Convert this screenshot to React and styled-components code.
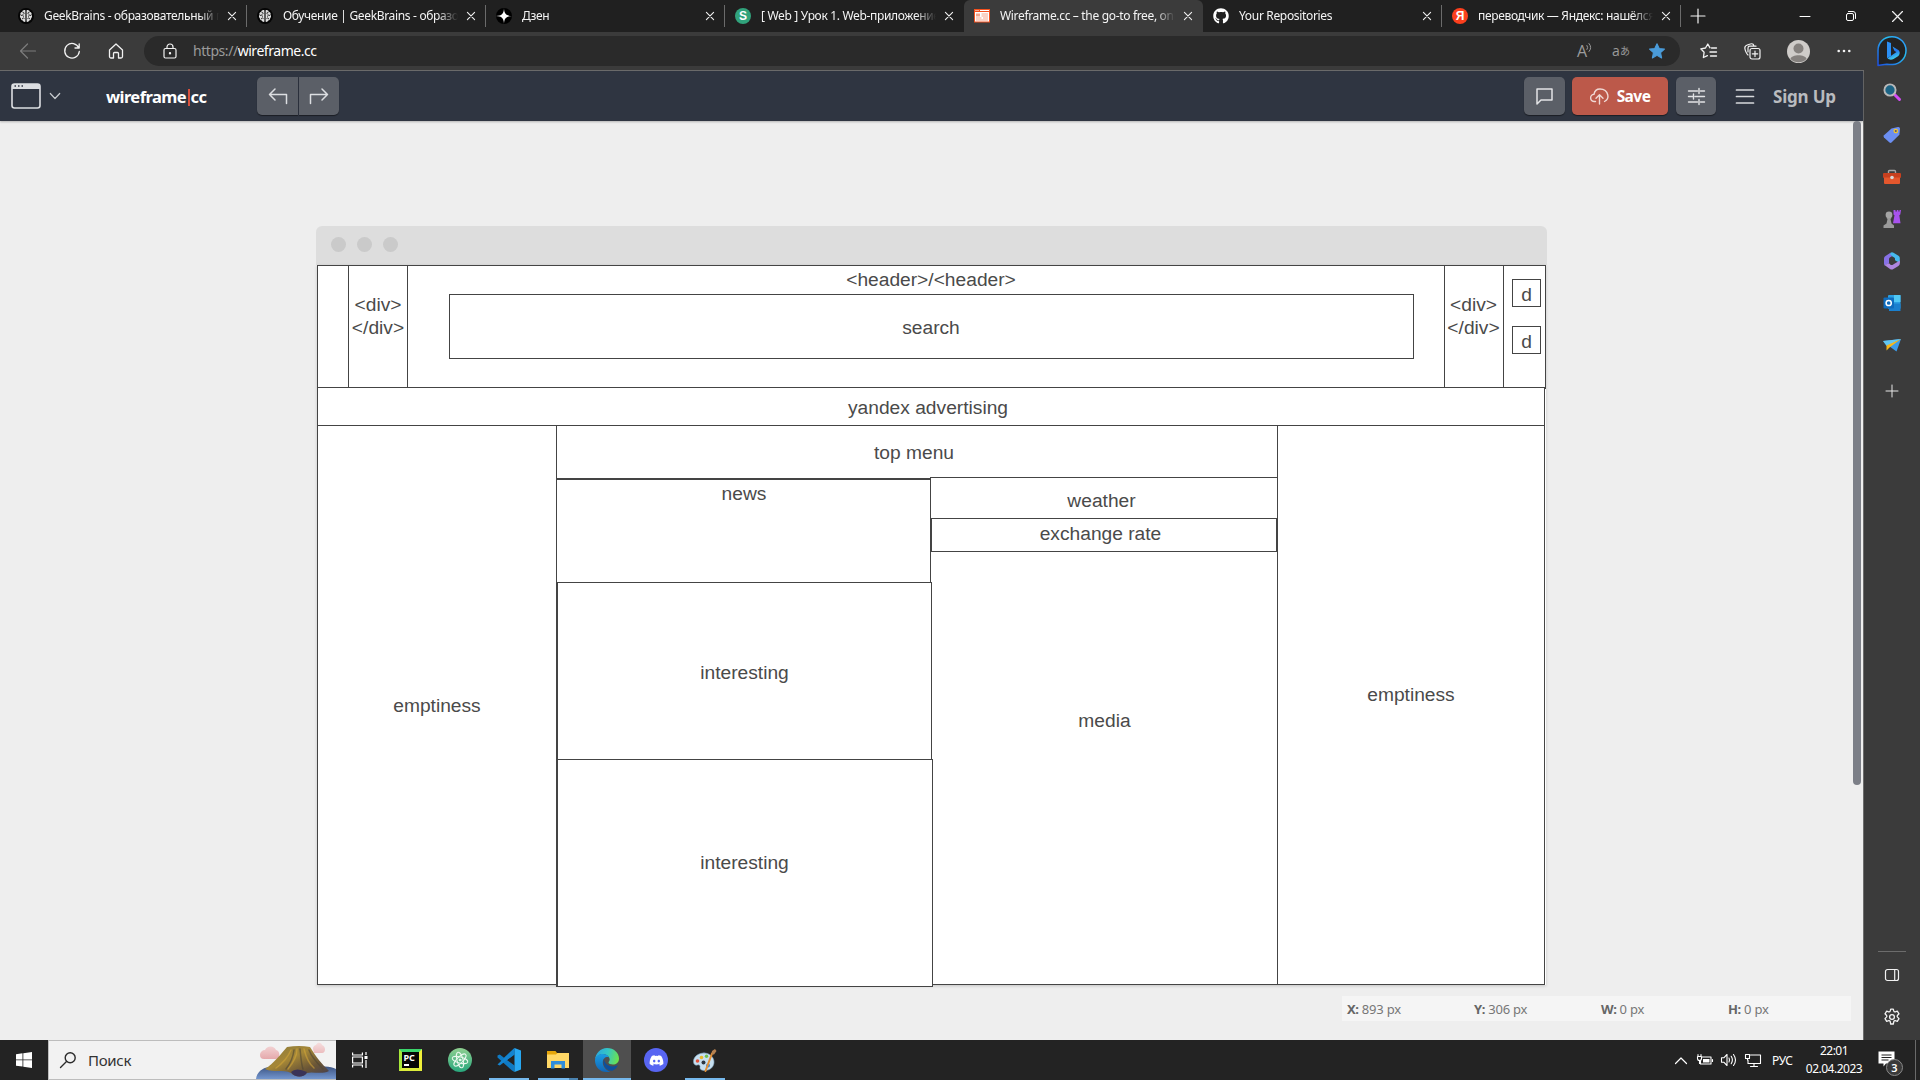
import React from 'react';
import styled, { createGlobalStyle, css } from 'styled-components';
import { FaGithub, FaDiscord } from 'react-icons/fa';

const Global = createGlobalStyle`
  *, *::before, *::after { box-sizing: border-box; }
  body { margin: 0; background: #202020; overflow: hidden; }
`;

const ui = '"Noto Sans", "Open Sans", sans-serif';

const Screen = styled.div`
  width: 1920px;
  height: 1080px;
  display: flex;
  flex-direction: column;
  overflow: hidden;
  font-family: ${ui};
  background: #202020;
`;

const Glyph = styled.svg`
  display: block;
  flex: none;
  width: ${p => p.$w || 20}px;
  height: ${p => p.$h || p.$w || 20}px;
  fill: none;
  stroke: ${p => p.$c || 'none'};
  stroke-width: ${p => p.$s || 1.2};
  stroke-linecap: round;
  stroke-linejoin: round;
  overflow: visible;
`;

/* ---------- tab strip ---------- */

const TabStrip = styled.div`
  height: 32px;
  flex: none;
  display: flex;
  background: #202020;
  padding-left: 8px;
`;

const TabBox = styled.div`
  width: 239px;
  height: 32px;
  flex: none;
  display: flex;
  align-items: center;
  padding: 0 10px;
  border-right: 1px solid transparent;
  border-image: ${p => (p.$line ? 'linear-gradient(transparent 6px, #6b6b6b 6px, #6b6b6b 26px, transparent 26px) 1' : 'none')};
  ${p => p.$active && css`
    background: #3b3b3b;
    border-radius: 6px 6px 0 0;
  `}
`;

const Favicon = styled.span`
  width: 16px;
  height: 16px;
  flex: none;
  display: flex;
  color: #fff;
`;

const TabTitle = styled.span`
  flex: 1;
  min-width: 0;
  margin: 0 9px 0 10px;
  font-size: 12px;
  line-height: 18px;
  letter-spacing: -0.33px;
  color: #f4f4f4;
  white-space: nowrap;
  overflow: hidden;
  mask-image: linear-gradient(to right, #000 calc(100% - 20px), transparent);
`;

const TabTools = styled.div`
  flex: 1;
  display: flex;
  align-items: center;
  padding-left: 10px;
`;

const WindowButtons = styled.div`
  margin-left: auto;
  display: flex;
  align-items: center;
  gap: 36px;
  padding-right: 17px;
`;

const Cross = ({ size = 8, s = 1.4 }) => (
  <Glyph $w={size} $c="#f0f0f0" $s={s} viewBox="0 0 10 10"><path d="M.5.5 9.5 9.5M9.5.5.5 9.5" /></Glyph>
);

const BrainIcon = () => (
  <Glyph $w={16} viewBox="0 0 16 16">
    <circle cx="8" cy="8" r="8" fill="#050505" />
    <path d="M7.700 2.400C6 1.400 4.400 2.300 4.300 3.700 2.500 4 2 5.600 2.600 6.700c-1 1.100-.8 2.600.2 3.300-.1 1.600.8 2.500 2 2.500.6 1.500 2.100 1.800 2.900 1zM8.300 2.400c1.700-1 3.300-.1 3.400 1.300 1.800.3 2.300 1.900 1.700 3 1 1.100.8 2.600-.2 3.300.1 1.600-.8 2.500-2 2.500-.6 1.500-2.100 1.800-2.900 1z" fill="#dedede" />
    <path d="M8 2v12M5 4.300c1.300-.2 1.500 1.200.6 1.900M3.300 7.400c1-.8 2.200-.2 2.200.8M4.300 10.800c0-1 1.200-1.200 1.900-.5M11 4.300c-1.300-.2-1.500 1.200-.6 1.900M12.700 7.400c-1-.8-2.200-.2-2.200.8M11.700 10.800c0-1-1.200-1.200-1.900-.5" stroke="#111" strokeWidth=".9" />
  </Glyph>
);

const ZenIcon = () => (
  <Glyph $w={16} viewBox="0 0 16 16">
    <circle cx="8" cy="8" r="8" fill="#000" />
    <path d="M8 0c.1 5.600 2.200 7.900 8 8-5.800.1-7.900 2.400-8 8-.1-5.600-2.200-7.900-8-8C5.800 7.900 7.900 5.600 8 0z" fill="#fff" />
  </Glyph>
);

const LetterIcon = styled.span`
  width: 16px;
  height: 16px;
  border-radius: 50%;
  background: ${p => p.$bg};
  color: #fff;
  font: bold 12px/16px "Liberation Sans", Arial, sans-serif;
  text-align: center;
`;

const WireIcon = () => (
  <Glyph $w={16} viewBox="0 0 16 16">
    <path d="M0 1h16v13.500H0z" fill="#f4511e" />
    <path d="M1 4h14v9.500H1z" fill="#fff" />
    <path d="M2 5.500h4v3H2zM7.500 5.500H14v1H7.500zM7.500 7.500H14v1H7.500zM2 9.500h5.500v1H2zM9 9.500h5v1H9zM2 11.500h12v1H2z" fill="#f5a68c" />
    <path d="M1.500 2h1v1h-1zM3.500 2h1v1h-1zM6 2h9v1H6z" fill="#fff" />
  </Glyph>
);

const tabs = [
  { icon: <BrainIcon />, title: 'GeekBrains - образовательный портал', line: true },
  { icon: <BrainIcon />, title: 'Обучение | GeekBrains - образовательный', line: true },
  { icon: <ZenIcon />, title: 'Дзен', line: true },
  { icon: <LetterIcon $bg="#31a37c">S</LetterIcon>, title: '[ Web ] Урок 1. Web-приложение' },
  { icon: <WireIcon />, title: 'Wireframe.cc – the go-to free, online', active: true },
  { icon: <FaGithub size={16} />, title: 'Your Repositories', line: true },
  { icon: <LetterIcon $bg="#fc3f1d">Я</LetterIcon>, title: 'переводчик — Яндекс: нашёлся', line: true },
];

const Tabs = () => (
  <TabStrip>
    {tabs.map((t, i) => (
      <TabBox key={i} $active={t.active} $line={t.line}>
        <Favicon>{t.icon}</Favicon>
        <TabTitle>{t.title}</TabTitle>
        <Cross />
      </TabBox>
    ))}
    <TabTools>
      <Glyph $w={14} $c="#f4f4f4" viewBox="0 0 14 14"><path d="M7 0v14M0 7h14" /></Glyph>
      <WindowButtons>
        <Glyph $w={10} $c="#fff" $s={1} viewBox="0 0 10 10"><path d="M0 5.500h10" /></Glyph>
        <Glyph $w={10} $c="#fff" $s={1} viewBox="0 0 10 10">
          <rect x=".5" y="2.500" width="7" height="7" rx="1.500" />
          <path d="M2.500.5h4.500a2.500 2.500 0 0 1 2.500 2.500v4.500" />
        </Glyph>
        <Cross size={11} s={1.1} />
      </WindowButtons>
    </TabTools>
  </TabStrip>
);

/* ---------- address toolbar ---------- */

const Toolbar = styled.div`
  height: 38px;
  flex: none;
  display: flex;
  align-items: center;
  background: #3b3b3b;
`;

const NavSlot = styled.span`
  width: ${p => p.$w}px;
  flex: none;
  display: flex;
  justify-content: center;
`;

const AddressBar = styled.div`
  width: 1536px;
  height: 30px;
  flex: none;
  border-radius: 15px;
  background: #2a2a2a;
  display: flex;
  align-items: center;
  padding-left: 8px;
  padding-right: 5px;
`;

const Url = styled.span`
  margin-left: 5px;
  font-size: 14px;
  line-height: 20px;
  letter-spacing: -0.45px;
  color: #fff;
  flex: 1;
`;
const Scheme = styled.span`color: #9a9a9a;`;

const SmallLabel = styled.span`
  font: ${p => p.$size}px/18px "Open Sans", "Noto Sans CJK JP", sans-serif;
  color: #9b9b9b;
`;

const BingIcon = () => (
  <Glyph $w={32} viewBox="0 0 32 32">
    <defs>
      <linearGradient id="ring" x1="1" y1="0" x2="0" y2="1">
        <stop offset="0" stopColor="#2d8cff" /><stop offset=".35" stopColor="#27bdf0" /><stop offset="1" stopColor="#1d4fe0" />
      </linearGradient>
      <linearGradient id="bb" x1="0" y1="0" x2=".4" y2="1">
        <stop offset="0" stopColor="#35b8f5" /><stop offset=".5" stopColor="#2374ee" /><stop offset="1" stopColor="#41d3ee" />
      </linearGradient>
    </defs>
    <path d="M2 30.500V15.500C2 7.500 8 1.800 16 1.800S30 8 30 15.500 24 29.500 16.500 29.500c-2 0-4-.2-5.500-.2-2.500.2-6 .8-9 1.200z" fill="#232323" stroke="url(#ring)" strokeWidth="1.500" />
    <path d="M11 6.500l4 1.500v13l-4 2.300z" fill="#2b8ff4" />
    <path d="M16.500 11.500l2 4.500 2 1-9 6.300c2 2 4.500 1.500 6 .6l4.500-2.700c2.500-1.800 2.200-5.500-.5-6.700z" fill="url(#bb)" />
  </Glyph>
);

const AddressToolbar = () => (
  <Toolbar>
    <NavSlot $w={56}><Glyph $w={16} $c="#7d7d7d" viewBox="0 0 16 16"><path d="M.5 8h15M7.500 1 .5 8l7 7" /></Glyph></NavSlot>
    <NavSlot $w={32}><Glyph $w={16} $c="#f2f2f2" $s={1.3} viewBox="0 0 16 16"><path d="M14.800 5A7.300 7.300 0 1 0 15.300 8.500M15.200.8V5H11" /></Glyph></NavSlot>
    <NavSlot $w={56}><Glyph $w={16} $c="#f2f2f2" $s={1.3} viewBox="0 0 16 16"><path d="M1.500 7 8 1l6.500 6v6.500a1.500 1.500 0 0 1-1.500 1.500H10.500v-4.500a1 1 0 0 0-1-1h-3a1 1 0 0 0-1 1V15H3a1.500 1.500 0 0 1-1.500-1.500z" /></Glyph></NavSlot>
    <AddressBar>
      <NavSlot $w={36}><Glyph $w={14} $h={16} $c="#f2f2f2" viewBox="0 0 14 16"><rect x="1" y="5.500" width="12" height="9.500" rx="1.500" /><path d="M4 5.500V4a3 3 0 0 1 6 0v1.500" /><circle cx="7" cy="10.200" r=".6" fill="#fff" /></Glyph></NavSlot>
      <Url><Scheme>https://</Scheme>wireframe.cc</Url>
      <NavSlot $w={36}><SmallLabel $size={16}>A</SmallLabel><Glyph $w={6} $h={14} $c="#9b9b9b" $s={1} viewBox="0 0 6 14"><path d="M0 3.500q1.500 2 0 4M2 1.500q3.500 4 0 8" /></Glyph></NavSlot>
      <NavSlot $w={36}><SmallLabel $size={14}>a</SmallLabel><SmallLabel $size={10}>あ</SmallLabel></NavSlot>
      <NavSlot $w={36}><Glyph $w={16} viewBox="0 0 18 18"><path d="M9 .8l2.500 5.400 5.900.7-4.400 4 1.200 5.900L9 13.900l-5.200 2.900L5 10.900l-4.400-4 5.900-.7z" fill="#4a9bd9" stroke="#4a9bd9" /></Glyph></NavSlot>
    </AddressBar>
    <NavSlot $w={56}><Glyph $w={17} $h={16} $c="#f2f2f2" $s={1.3} viewBox="0 0 17 16"><path d="M10 4.800 7.800 1 5.500 5 .8 5.800l3.300 3.500-.7 5.200 4-1.900M11.500 5h5M10 9h6.500M10.500 13h6" /></Glyph></NavSlot>
    <NavSlot $w={32}><Glyph $w={17} $h={17} $c="#f2f2f2" $s={1.2} viewBox="0 0 17 17"><rect x="6" y="5.500" width="10" height="10.500" rx="2" /><path d="M11 8v5.500M8.300 10.800h5.400M4 12C2.500 11 1 7 .8 5c0-2 1-2.500 3-3.200S8 0 9 1.200c.5.6.7 1.200 1 2M4 9V5c0-1 .5-1.800 1.800-1.800H12" /></Glyph></NavSlot>
    <NavSlot $w={60}><Glyph $w={23} viewBox="0 0 23 23"><circle cx="11.500" cy="11.500" r="11.500" fill="#cfccc9" /><circle cx="11.500" cy="8.500" r="5" fill="#85817e" /><path d="M3.500 19c1-5 15-5 16 0a11.500 11.500 0 0 1-16 0z" fill="#85817e" /></Glyph></NavSlot>
    <NavSlot $w={32}><Glyph $w={14} $h={4} viewBox="0 0 14 4"><g fill="#f2f2f2"><circle cx="1.700" cy="2" r="1.300" /><circle cx="7" cy="2" r="1.300" /><circle cx="12.300" cy="2" r="1.300" /></g></Glyph></NavSlot>
    <NavSlot $w={64}><BingIcon /></NavSlot>
  </Toolbar>
);

/* ---------- web page ---------- */

const Middle = styled.div`
  flex: 1;
  display: flex;
  min-height: 0;
`;

const WebPage = styled.main`
  width: 1864px;
  flex: none;
  display: flex;
  flex-direction: column;
  border-top: 1px solid #6c6c6c;
  border-right: 1px solid #6c6c6c;
  background: #eee;
`;

const AppBar = styled.header`
  height: 50px;
  flex: none;
  display: flex;
  align-items: center;
  background: #2f3541;
  padding: 0 27px 0 11px;
  box-shadow: 0 1px 2px rgba(0, 0, 0, .25);
`;

const Logo = styled.div`
  width: 151px;
  margin-left: 37px;
  padding-top: 2px;
  display: flex;
  align-items: center;
  font: bold 16.500px/24px ${ui};
  letter-spacing: -0.58px;
  color: #fff;
`;
const Bar = styled.span`
  width: 2px;
  height: 17px;
  margin: 1px 1px 0 1.500px;
  background: #d9503c;
`;

const BarButton = styled.button`
  width: ${p => p.$w}px;
  height: 38px;
  border: 0;
  padding: 0;
  margin-left: ${p => p.$ml || 0}px;
  border-radius: ${p => p.$radius || '5px'};
  background: ${p => p.$bg || '#5b5f67'};
  box-shadow: 0 1px 1px rgba(0, 0, 0, .45);
  display: flex;
  align-items: center;
  justify-content: center;
  gap: 8px;
  color: #fff;
  font: bold 15.500px/20px ${ui};
  letter-spacing: -0.55px;
`;

const BarRight = styled.div`
  margin-left: auto;
  display: flex;
  align-items: center;
`;

const SignUp = styled.span`
  width: 63px;
  margin-left: -1px;
  padding-top: 2px;
  font: bold 17px/24px ${ui};
  letter-spacing: -0.2px;
  color: #b9bbbf;
  white-space: nowrap;
`;

const Workspace = styled.div`
  flex: 1;
  min-height: 0;
  display: grid;
  grid-template-columns: 1fr 10px;
  grid-template-rows: 875px 25px;
`;

const Scrollbar = styled.div`
  width: 8px;
  height: 664px;
  border-radius: 4px;
  background: #7c7f87;
`;

const Mockup = styled.section`
  width: 1231px;
  margin: 105px 0 0 316px;
`;

const MockupBar = styled.div`
  height: 39px;
  border-radius: 6px 6px 0 0;
  background: #ddd;
  display: flex;
  align-items: center;
  gap: 11px;
  padding: 0 0 2px 15px;
`;
const Dot = styled.span`
  width: 15px;
  height: 15px;
  border-radius: 50%;
  background: #cacaca;
`;

const Canvas = styled.div`
  position: relative;
  width: 1229px;
  height: 720px;
  margin: 0 1px;
  background: #fff;
  box-shadow: 0 1px 3px rgba(0, 0, 0, .18);
`;

const Stencil = styled.div`
  position: absolute;
  left: ${p => p.$x - 317}px;
  top: ${p => p.$y - 265}px;
  width: ${p => p.$r - p.$x + 1}px;
  height: ${p => p.$b - p.$y + 1}px;
  border: 1px solid #444;
  background: #fff;
`;

const Label = styled.div`
  position: absolute;
  left: ${p => p.$cx - 317 - 100}px;
  top: ${p => p.$cy - 265 - 12}px;
  width: 200px;
  text-align: center;
  white-space: pre-line;
  font: 19.200px/23px "Liberation Sans", Arial, sans-serif;
  color: #4a4a4a;
`;

const stencils = [
  [317, 265, 1545, 388], [348, 265, 407, 387], [449, 294, 1413, 358],
  [1444, 265, 1503, 387], [1512, 279, 1540, 306], [1512, 326, 1540, 353],
  [317, 387, 1544, 425], [317, 425, 556, 984], [1277, 425, 1544, 984],
  [556, 425, 1277, 478], [930, 477, 1277, 984], [556, 479, 930, 984],
  [930, 477, 1277, 518], [931, 518, 1276, 551],
  [557, 582, 931, 759], [557, 759, 932, 986], [556, 582, 556, 986],
];

const labels = [
  ['<header>/<header>', 931, 280], ['search', 931, 328], ['<div>\n</div>', 378, 305],
  ['<div>\n</div>', 1473.5, 305], ['d', 1526.5, 295], ['d', 1526.5, 342],
  ['yandex advertising', 928, 408], ['top menu', 914, 453], ['news', 744, 494],
  ['weather', 1101.5, 501], ['exchange rate', 1100.5, 534], ['interesting', 744.5, 673],
  ['interesting', 744.5, 863], ['media', 1104.5, 721], ['emptiness', 437, 706], ['emptiness', 1411, 695],
];

const Coordinates = styled.div`
  width: 509px;
  height: 25px;
  margin-left: 1342px;
  background: #f5f5f5;
  display: grid;
  grid-template-columns: repeat(4, 127px);
  padding-left: 5px;
  font: 13px/27px ${ui};
  letter-spacing: -0.2px;
  color: #777;
  b { color: #666; letter-spacing: -0.4px; }
`;

const Page = () => (
  <WebPage>
    <AppBar>
      <Glyph $w={30} $h={26} viewBox="0 0 30 26">
        <rect x="1" y="1" width="28" height="24" rx="2.500" stroke="#dcdee1" strokeWidth="1.600" />
        <path d="M1 3a2 2 0 0 1 2-2h24a2 2 0 0 1 2 2v3H1z" fill="#dcdee1" />
        <path d="M3.500 3h1.500M7 3h1.500M10.500 3H12" stroke="#2f3541" strokeWidth="1.500" strokeLinecap="butt" />
      </Glyph>
      <NavSlot $w={28}><Glyph $w={10} $h={6} $c="#c9ccd0" viewBox="0 0 10 6"><path d="M.3.5 5 5.500 9.700.5" /></Glyph></NavSlot>
      <Logo>wireframe<Bar />cc</Logo>
      <BarButton $w={41} $radius="5px 0 0 5px">
        <Glyph $w={20} $h={17} $c="#dcdee1" $s={1.5} viewBox="0 0 20 17"><path d="M7 1 1.500 6.500 7 12M1.500 6.500H18.500V15.500" /></Glyph>
      </BarButton>
      <BarButton $w={40} $ml={1} $radius="0 5px 5px 0">
        <Glyph $w={20} $h={17} $c="#dcdee1" $s={1.5} viewBox="0 0 20 17"><path d="M13 1l5.500 5.500L13 12M18.500 6.500H1.500V15.500" /></Glyph>
      </BarButton>
      <BarRight>
        <BarButton $w={41}><Glyph $w={17} $c="#e3e4e6" $s={1.5} viewBox="0 0 17 17"><path d="M1 1h15v11H5l-4 4z" /></Glyph></BarButton>
        <BarButton $w={96} $ml={7} $bg="#bc594a">
          <Glyph $w={19} $h={17} $c="#f0d9d5" $s={1.4} viewBox="0 0 19 17"><path d="M5.500 13.500H4.500a3.600 3.600 0 0 1-.5-7.200C4.500 3 7 1 10 1c4 0 7 2.600 7.800 6 .6 2.600-.8 5.200-3.300 6.500M9.500 16V7M6 10.200 9.500 6.800l3.500 3.400" /></Glyph>
          Save
        </BarButton>
        <BarButton $w={40} $ml={8}><Glyph $w={17} $h={19} $c="#e3e4e6" $s={1.4} viewBox="0 0 17 19"><path d="M.5 4h9M12.500 4h4M11 1.500v5M.5 9.500h4M7 9.500h9.500M5.500 7v5M.5 15h9M12.500 15h4M11 12.500v5" /></Glyph></BarButton>
        <NavSlot $w={58}><Glyph $w={18} $h={15} $c="#d7d9dc" $s={1.7} viewBox="0 0 18 15"><path d="M.5 1h17M.5 7.500h17M.5 14h17" /></Glyph></NavSlot>
        <SignUp>Sign Up</SignUp>
      </BarRight>
    </AppBar>
    <Workspace>
      <Mockup>
        <MockupBar><Dot /><Dot /><Dot /></MockupBar>
        <Canvas>
          {stencils.map(([x, y, r, b], i) => <Stencil key={i} $x={x} $y={y} $r={r} $b={b} />)}
          {labels.map(([t, x, y], i) => <Label key={i} $cx={x} $cy={y}>{t}</Label>)}
        </Canvas>
      </Mockup>
      <Scrollbar />
      <Coordinates>
        <span><b>X:</b> 893 px</span><span><b>Y:</b> 306 px</span><span><b>W:</b> 0 px</span><span><b>H:</b> 0 px</span>
      </Coordinates>
    </Workspace>
  </WebPage>
);

/* ---------- edge sidebar ---------- */

const SideBar = styled.aside`
  flex: 1;
  display: flex;
  flex-direction: column;
  align-items: center;
  background: #3b3b3b;
`;
const SideItem = styled.div`
  height: ${p => p.$h || 42}px;
  flex: none;
  display: flex;
  align-items: center;
`;
const SideRule = styled.div`
  width: 28px;
  height: 1px;
  margin-top: auto;
  margin-bottom: 2px;
  background: #6c6c6c;
`;

const Side = () => (
  <SideBar>
    <SideItem $h={44}><Glyph $w={18} viewBox="0 0 18 18"><path d="M11.500 11.500l5 5" stroke="#d24cf5" strokeWidth="3" /><circle cx="7" cy="7" r="5.600" fill="#1c6485" stroke="#b9b9b9" strokeWidth="1.900" /></Glyph></SideItem>
    <SideItem><Glyph $w={18} viewBox="0 0 18 18"><path d="M8.500 2.500 15 1q2-.2 2 1.800l-.6 6L8.500 16.500q-1 .8-2 0L1 11.500q-1-1.200 0-2.200z" fill="#6c8ff2" /><circle cx="12.800" cy="5" r="1.700" fill="#54527a" stroke="#f2c62e" strokeWidth="1.300" /></Glyph></SideItem>
    <SideItem><Glyph $w={18} $h={16} viewBox="0 0 18 16"><path d="M5.500 4V2.500a1 1 0 0 1 1-1h5a1 1 0 0 1 1 1V4" stroke="#a7a7a7" strokeWidth="1.400" /><rect y="4" width="18" height="5" rx="1" fill="#c7401f" /><path d="M1 8.500h16V14a1 1 0 0 1-1 1H2a1 1 0 0 1-1-1z" fill="#e4572d" /><circle cx="9" cy="8.500" r="1.800" fill="#d9d9d9" /></Glyph></SideItem>
    <SideItem><Glyph $w={18} viewBox="0 0 18 18"><path d="M10.500 0h2v1.500h1.300V0h1.600v1.500h1.100V0h1.500l-.7 4.500-1 .8 1.200 8H10l1.500-8-1-.8z" fill="#a852ee" /><circle cx="6" cy="5" r="3.400" fill="#a4a4a4" /><path d="M3.500 8h5l-1 1 1 4.500 2.500 2V18H.500v-2.500l3-2 1-4.500z" fill="#9a9a9a" /></Glyph></SideItem>
    <SideItem>
      <Glyph $w={18} viewBox="0 0 18 18">
        <path d="M7.500.8q1.500-1 3 0l5 3q1.300.8 1.300 2.300V11L12 8.300V6.800q0-.8-.8-1.300L6.500 2.700z" fill="#46b9ee" />
        <path d="M7.500.8 2.500 3.900Q1 4.800 1 6.500v5q0 1.200.8 2L6 11.200V7q0-1 .8-1.500L9 4.200Q6.500 2.500 7.500.8z" fill="#8771e6" />
        <path d="M1.500 13 7 17q1.700 1 3.400 0l5-3q1.500-1 1.500-3V8.500l-5.500 3.300-2 1.100q-.8.400-1.600 0L6 11.200z" fill="#ae86e0" />
      </Glyph>
    </SideItem>
    <SideItem><Glyph $w={18} viewBox="0 0 18 18"><rect x="5" y="1" width="12.500" height="14" rx="1" fill="#2a9fe3" /><path d="M11 1h6.500v7H11z" fill="#50c8f4" /><path d="M6 9.500h11.500V17H6z" fill="#1a80cf" /><rect x=".5" y="3.500" width="10.500" height="11" rx="1" fill="#0f6cbd" /><circle cx="5.700" cy="9" r="2.600" stroke="#fff" strokeWidth="1.500" /></Glyph></SideItem>
    <SideItem><Glyph $w={18} $h={14} viewBox="0 0 18 14"><path d="M0 3 18 1 13.500 13.500 8 9.500z" fill="#3b9bea" /><path d="M0 3 18 1 3.500 8z" fill="#62c7f2" /><path d="M3.500 12.500V7.500L18 1 6.500 9.500z" fill="#f7b719" /></Glyph></SideItem>
    <SideItem $h={50}><Glyph $w={12} $c="#e8e8e8" $s={1} viewBox="0 0 12 12"><path d="M6 0v12M0 6h12" /></Glyph></SideItem>
    <SideRule />
    <SideItem><Glyph $w={14} $h={12} $c="#f2f2f2" viewBox="0 0 14 12"><rect x=".5" y=".5" width="13" height="11" rx="2" /><path d="M9.700.5v11" /></Glyph></SideItem>
    <SideItem><Glyph $w={18} $c="#f2f2f2" $s={1.3} viewBox="0 0 18 18"><circle cx="9" cy="9" r="2.400" /><path d="M7.200 3 7.700 1.200h2.600l.5 1.800q.4 1 1.500.8l2-.6 1.700 2.600-1.400 1.500q-.8.9 0 1.800l1.400 1.500-1.700 2.700-2-.6q-1.100-.2-1.500.8l-.5 2.500H7.700l-.5-2.500q-.4-1-1.500-.8l-2 .6L2 10.600l1.400-1.500q.8-.9 0-1.800L2 5.800l1.700-2.600 2 .6q1.100.2 1.500-.8z" /></Glyph></SideItem>
    <SideItem $h={2} />
  </SideBar>
);

/* ---------- windows taskbar ---------- */

const TaskBar = styled.footer`
  height: 40px;
  flex: none;
  display: flex;
  background: #232323;
`;

const TaskSlot = styled.div`
  width: 48px;
  height: 40px;
  flex: none;
  margin-right: ${p => p.$mr || 0}px;
  display: flex;
  align-items: center;
  justify-content: center;
  background-color: ${p => (p.$active ? '#4f4f4f' : 'transparent')};
  background-image: ${p => p.$run ? (p.$multi ? 'linear-gradient(to right, #76b9ed 31px, #4b83b0 31px)' : 'linear-gradient(#76b9ed, #76b9ed)') : 'none'};
  background-size: ${p => p.$run || 0}px 2px;
  background-position: center bottom;
  background-repeat: no-repeat;
`;

const SearchBox = styled.div`
  width: 288px;
  height: 40px;
  flex: none;
  display: flex;
  align-items: center;
  padding-left: 11px;
  background: #f2f2f2;
  border: 1px solid #bdbdbd;
  border-right: 0;
`;
const SearchText = styled.span`
  flex: 1;
  margin-left: 12px;
  font-size: 15px;
  line-height: 20px;
  letter-spacing: -0.3px;
  color: #333;
`;

const PyCharm = styled.div`
  width: 23px;
  height: 22px;
  border: 3px solid;
  border-color: #3bd66c #f0f03a #dced3b #a8e83a;
  background: #070707;
  color: #fff;
  font: bold 9px/9px ${ui};
  padding: 1px 0 0 2px;
  &::after { content: ''; display: block; width: 5px; height: 1.500px; background: #fff; margin-top: 2px; }
`;

const Round = styled.div`
  width: 24px;
  height: 24px;
  border-radius: 50%;
  background: ${p => p.$bg};
  color: #fff;
  display: flex;
  align-items: center;
  justify-content: center;
`;

const Tray = styled.div`
  margin-left: auto;
  display: flex;
  align-items: center;
  color: #fff;
`;
const Lang = styled.span`
  width: 23px;
  margin-left: 7px;
  font-size: 12px;
  letter-spacing: -0.3px;
`;
const Clock = styled.div`
  width: 78px;
  text-align: center;
  font-size: 12px;
  line-height: 18px;
  letter-spacing: -0.5px;
  padding-bottom: 1px;
`;
const Notice = styled.div`
  width: 42px;
  height: 40px;
  position: relative;
  display: flex;
  align-items: center;
  padding: 0 0 2px 5px;
`;
const Badge = styled.span`
  position: absolute;
  left: 13px;
  top: 19px;
  width: 17px;
  height: 17px;
  border-radius: 50%;
  border: 1px solid #8a8a8a;
  background: #3a3a3a;
  font: 600 11px/15px ${ui};
  text-align: center;
`;
const PeekLine = styled.div`
  width: 5px;
  height: 40px;
  border-left: 1px solid #6a6a6a;
`;

const Volcano = () => (
  <Glyph $w={80} $h={38} viewBox="0 0 80 38">
    <defs>
      <linearGradient id="hill" x1="0" y1="0" x2="1" y2="1"><stop offset="0" stopColor="#8a7a3a" /><stop offset=".4" stopColor="#a58737" /><stop offset=".7" stopColor="#6b5636" /><stop offset="1" stopColor="#433d50" /></linearGradient>
      <linearGradient id="sea" x1="0" y1="0" x2="0" y2="1"><stop offset="0" stopColor="#3d5482" /><stop offset="1" stopColor="#7396cf" /></linearGradient>
      <linearGradient id="cloud" x1="0" y1="0" x2="0" y2="1"><stop offset="0" stopColor="#f6dede" /><stop offset="1" stopColor="#e5a9ac" /></linearGradient>
    </defs>
    <path d="M4 14a5 5 0 0 1 5-5 6 6 0 0 1 11 0c4 0 5 9 0 9H8a4 4 0 0 1-4-4zM57 8a4 4 0 0 1 3-4c2-4 6-2 6 0 4 1 4 8 0 8h-8z" fill="url(#cloud)" />
    <path d="M0 38c1-7 6-11 13-12h50c8-1 13 0 17 2v10z" fill="url(#sea)" />
    <path d="M9 28C18 22 24 14 31 6q12-2 23 0c6 10 12 17 19 24-8 4-16 0-22 2-4 5-12 4-16 0-8-4-17 0-26-4z" fill="url(#hill)" />
    <path d="M35 9c-3 7-8 13-15 18M41 8c0 8-4 14-9 20M48 8c2 8 4 14 10 19" stroke="#d5a838" strokeWidth="1.500" opacity=".55" />
    <path d="M38 9c-1 8-4 14-8 19M44 8c1 8 1 14 3 20M53 9c3 8 8 13 14 19" stroke="#4f4634" strokeWidth="1.500" opacity=".6" />
    <path d="M35 31q5-5 16 0c-2 6-13 6-16 0z" fill="#3a3357" />
  </Glyph>
);

const EdgeIcon = () => (
  <Glyph $w={24} viewBox="0 0 24 24">
    <defs>
      <linearGradient id="eg" x1="0" y1=".3" x2="1" y2=".5"><stop offset="0" stopColor="#2aa7e0" /><stop offset=".5" stopColor="#35c6c4" /><stop offset="1" stopColor="#6be24f" /></linearGradient>
      <linearGradient id="eb" x1="0" y1="0" x2="0" y2="1"><stop offset="0" stopColor="#1b9de2" /><stop offset="1" stopColor="#1265b5" /></linearGradient>
    </defs>
    <path d="M0 12C.5 5 5.500 0 12 0c7 0 12 5 12 10.500 0 4-3 6-6 6-2.500 0-4.500-.8-4.500-2 0-.8 1.200-1.200 1.200-3C14.700 8.500 11.500 6 8 6 4 6 1 8.500 0 12z" fill="url(#eg)" />
    <path d="M0 12.500C0 8.500 3.500 6 7.800 6c3 0 5.500 1.500 6.500 3.500-3-1.500-6.500.8-6.500 4.500 0 4.500 3 8.500 7.500 9.500C7 26 0 20 0 12.500z" fill="url(#eb)" />
    <path d="M9 11c-2 6 2 12 8.500 11.700 2-.9 4-2.700 5-4.700.3-.6-.2-.8-.7-.5-5.500 2.500-12 0-12.800-6.500z" fill="#0d4f9c" />
  </Glyph>
);

const Task = () => (
  <TaskBar>
    <TaskSlot><Glyph $w={16} viewBox="0 0 16 16"><path d="M0 2.200 6.500 1.300V7.500H0zM7.300 1.200 16 0v7.500H7.300zM0 8.300h6.500v6.300L0 13.700zM7.300 8.300H16V16l-8.700-1.200z" fill="#fff" /></Glyph></TaskSlot>
    <SearchBox>
      <Glyph $w={16} $c="#2b2b2b" $s={1.4} viewBox="0 0 16 16"><circle cx="10.200" cy="5.800" r="5" /><path d="M6.500 9.500.5 15.500" /></Glyph>
      <SearchText>Поиск</SearchText>
      <Volcano />
    </SearchBox>
    <TaskSlot $mr={2}>
      <Glyph $w={16} $c="#fff" $s={1.2} viewBox="0 0 16 16"><path strokeLinecap="butt" d="M.6.5V3h9.800V.5M.6 15.500V13h9.800v2.500M.6 5h9.800v6H.6zM14 0v3M14 8v8" /><path d="M12.500 4h3v3h-3z" fill="#fff" stroke="none" /></Glyph>
    </TaskSlot>
    <TaskSlot $mr={2}><PyCharm>PC</PyCharm></TaskSlot>
    <TaskSlot $mr={1}>
      <Round $bg="linear-gradient(#8fcf90, #27a77c)">
        <Glyph $w={18} $c="#eaf8ee" $s={1} viewBox="0 0 18 18"><ellipse cx="9" cy="9" rx="8" ry="3" transform="rotate(15 9 9)" /><ellipse cx="9" cy="9" rx="8" ry="3" transform="rotate(75 9 9)" /><ellipse cx="9" cy="9" rx="8" ry="3" transform="rotate(135 9 9)" /><circle cx="9" cy="9" r="1" fill="#fff" /></Glyph>
      </Round>
    </TaskSlot>
    <TaskSlot $mr={1} $run={40}>
      <Glyph $w={24} viewBox="0 0 24 24">
        <path d="M17.500 0 7 9.800 2.800 6.500.5 7.600v2L15 22.500l2.500 1.500V17.500L10 12l7.500-5.500z" fill="#0f7ac4" />
        <path d="M17.500 0 24 2.600v18.800L17.500 24z" fill="#28a8f2" />
        <path d="M.5 16.400 17.500 0v6.500L2.800 17.500z" fill="#1484d0" />
      </Glyph>
    </TaskSlot>
    <TaskSlot $mr={1} $run={40} $multi>
      <Glyph $w={22} $h={20} viewBox="0 0 22 20"><path d="M0 1h8.500l1.500 2H22v15H0z" fill="#e5a50a" /><path d="M0 4.500h9L10.500 3H22v15H0z" fill="#ffd766" /><path d="M4 18.500V11h14v7.500h-3.500v-4h-7v4z" fill="#2f8ddb" /></Glyph>
    </TaskSlot>
    <TaskSlot $mr={1} $active $run={48}><EdgeIcon /></TaskSlot>
    <TaskSlot $mr={1}><Round $bg="#5865f2"><FaDiscord size={15} /></Round></TaskSlot>
    <TaskSlot $run={40}>
      <Glyph $w={24} viewBox="0 0 24 24">
        <path d="M11 5C5 5 .5 9 .5 13.500c0 3.500 2.500 4 4 3.500 2-.6 3 .8 2.500 2.500-.4 2 2 3 4.500 3C17.500 22.500 21 18.500 21 14S17 5 11 5z" fill="#c6dff0" stroke="#84a9c6" strokeWidth=".6" />
        <circle cx="4.500" cy="13" r="1.800" fill="#e0533c" /><circle cx="8.500" cy="9.500" r="1.800" fill="#e9b62b" /><circle cx="13.500" cy="8.300" r="1.700" fill="#6fbf4d" /><circle cx="10.500" cy="14.500" r="2" fill="#2d3640" /><circle cx="15" cy="17.500" r="2" fill="#3c86d1" />
        <path d="M12.500 23 19 5.500" stroke="#e28f35" strokeWidth="2" /><path d="M18.500 6.500 19 3l3-2 1.500 2-2.500 3.500z" fill="#b58150" />
      </Glyph>
    </TaskSlot>
    <Tray>
      <NavSlot $w={24}><Glyph $w={12} $h={7} $c="#fff" viewBox="0 0 12 7"><path d="M.5 6.500 6 1l5.500 5.500" /></Glyph></NavSlot>
      <NavSlot $w={24}><Glyph $w={16} $h={12} $c="#fff" viewBox="0 0 16 12"><path d="M5 3h9v7H3.500V7M15.500 5.500v2M1 .5v2M4 .5v2M.5 2.500h4v2a2 2 0 0 1-4 0zM2.500 6.500V9.500" strokeWidth="1.100" /><path d="M6 5h6.500v3.500H6z" fill="#fff" stroke="none" /></Glyph></NavSlot>
      <NavSlot $w={24}><Glyph $w={16} $h={14} $c="#fff" $s={1.1} viewBox="0 0 16 14"><path d="M.5 4.700H3L6 1.500v11L3 9.300H.5zM8 5q1 2 0 4M10.200 3.300q2.400 3.700 0 7.400M12.500 1.500q4 5.500 0 11" /></Glyph></NavSlot>
      <NavSlot $w={24}><Glyph $w={16} $h={13} $c="#fff" $s={1.1} viewBox="0 0 16 13"><path d="M5.500 1H15.500v8.500H3V6M9 9.500v3M5.500 12.500h7M.5.5h4v4h-4zM2.500 4.500V6" /></Glyph></NavSlot>
      <Lang>РУС</Lang>
      <Clock>22:01<br />02.04.2023</Clock>
      <Notice>
        <Glyph $w={17} $h={16} viewBox="0 0 17 16"><path d="M.5.5h16v12H8l-2.500 3v-3h-5z" fill="#fff" /><path d="M3.500 4h10M3.500 6.500h10M3.500 9h7" stroke="#232323" strokeLinecap="butt" /></Glyph>
        <Badge>3</Badge>
      </Notice>
      <PeekLine />
    </Tray>
  </TaskBar>
);

export default function App() {
  return (
    <Screen>
      <Global />
      <Tabs />
      <AddressToolbar />
      <Middle>
        <Page />
        <Side />
      </Middle>
      <Task />
    </Screen>
  );
}
